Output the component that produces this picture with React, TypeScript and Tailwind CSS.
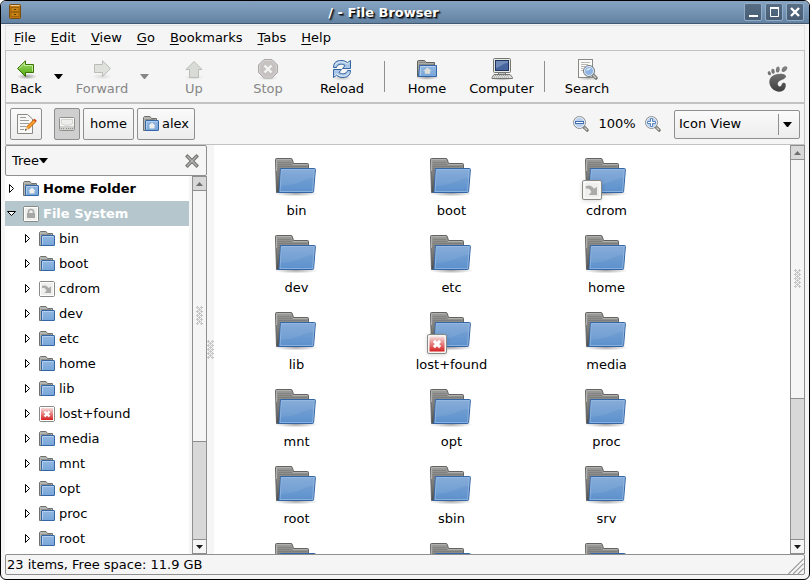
import React from "react";

const folders = [
  "bin",
  "boot",
  "cdrom",
  "dev",
  "etc",
  "home",
  "lib",
  "lost+found",
  "media",
  "mnt",
  "opt",
  "proc",
  "root",
  "sbin",
  "srv",
  "sys",
  "tmp",
  "usr",
];

// rows that fit in the side pane
const treeFolders = folders.slice(0, 13);

const menus = ["File", "Edit", "View", "Go", "Bookmarks", "Tabs", "Help"];

/* ---------- icons ---------- */

const Gradients = () => (
  <svg width="0" height="0" className="absolute" aria-hidden="true">
    <defs>
      <linearGradient id="blue" x1="0" y1="0" x2="0" y2="1">
        <stop offset="0" stopColor="#7ea7d6" />
        <stop offset="1" stopColor="#5c90cc" />
      </linearGradient>
      <linearGradient id="lightBlue" x1="0" y1="0" x2="0" y2="1">
        <stop offset="0" stopColor="#93b7e0" />
        <stop offset="1" stopColor="#77a6d9" />
      </linearGradient>
      <linearGradient id="gray" x1="0" y1="0" x2="0" y2="1">
        <stop offset="0" stopColor="#9c9c9a" />
        <stop offset="0.5" stopColor="#7d7d7b" />
        <stop offset="1" stopColor="#4c4c4a" />
      </linearGradient>
      <linearGradient id="green" x1="0" y1="0" x2="0" y2="1">
        <stop offset="0" stopColor="#a5dc72" />
        <stop offset="1" stopColor="#4da80c" />
      </linearGradient>
      <linearGradient id="red" x1="0" y1="0" x2="0" y2="1">
        <stop offset="0" stopColor="#f6dcdc" />
        <stop offset="1" stopColor="#d41f1f" />
      </linearGradient>
      <linearGradient id="foot" gradientUnits="userSpaceOnUse" x1="0" y1="0" x2="0" y2="28">
        <stop offset="0" stopColor="#8a8a8a" />
        <stop offset="1" stopColor="#3a3a3a" />
      </linearGradient>
      <radialGradient id="shade">
        <stop offset="0" stopColor="#000" stopOpacity="0.35" />
        <stop offset="1" stopColor="#000" stopOpacity="0" />
      </radialGradient>
    </defs>
  </svg>
);

const BigFolder = () => (
  <svg width="45" height="40" viewBox="0 0 45 40" aria-hidden="true">
    <ellipse cx="22" cy="36.5" rx="22" ry="3" fill="url(#shade)" />
    <path
      d="M1.5 2.5 Q1.5 1.5 2.5 1.5 H17 Q18 1.5 18.3 2.5 L19.5 6.5 H33.5 Q34.5 6.5 34.5 7.5 V30 L6 35.5 H2.5 Z"
      fill="url(#gray)"
      stroke="#636361"
    />
    <path d="M2.5 3 V14 M2.5 2.5 H17 M19 7.5 H33.5" stroke="#b0b0ae" fill="none" />
    <path
      d="M4 5.5 H17 M4 7.5 H18 M4 9.5 H33 M4 11.5 H6 M4 13.5 H6 M4 15.5 H6 M4 17.5 H6 M4 19.5 H6 M4 21.5 H6 M4 23.5 H5"
      stroke="#5b5b59"
      strokeOpacity="0.3"
    />
    <path
      d="M6.5 11.5 H40.5 Q41.5 11.5 41.4 12.5 L39.6 34.5 Q39.5 35.5 38.5 35.5 H4 Q5 35 5.2 33 Z"
      fill="url(#blue)"
      stroke="#3465a4"
    />
    <path d="M7.3 12.5 H40.3 L38.6 34.5 H6 Z" fill="none" stroke="#a5c4e8" strokeOpacity="0.6" />
    <path d="M8 13 H40 L39.3 21 C29 21 27 28 6.4 29 Z" fill="#fff" fillOpacity="0.07" />
  </svg>
);

const SmallFolder = ({ home = false }: { home?: boolean }) => (
  <svg width="16" height="16" viewBox="0 0 16 16" aria-hidden="true">
    <path d="M.5 14.5 V1.5 L1.5 .5 H7 L8.5 2.5 H13.5 V14.5 Z" fill="#b5b5b2" stroke="#6f716c" />
    <path d="M2 3.5 H12" stroke="#8e8f8b" />
    <rect x="2.5" y="4.5" width="13" height="10" rx="0.5" fill="url(#lightBlue)" stroke="#3465a4" />
    <path d="M3.5 13.5 V5.5 H14.5" fill="none" stroke="#b4cfee" />
    {home && <path d="M9 6.5 L12.5 10 H11.5 V12.5 H6.5 V10 H5.5 Z" fill="#eeeeec" />}
  </svg>
);

const HomeIcon = () => (
  <svg width="24" height="24" viewBox="0 0 24 24" aria-hidden="true">
    <ellipse cx="12" cy="20.5" rx="12" ry="2.5" fill="url(#shade)" />
    <path d="M2.5 19.5 V4 L3.5 3.5 H9.5 L11 5.5 H19.5 V19.5 Z" fill="#aaaaa7" stroke="#5f615c" />
    <path d="M4 5.5 H10 M4 7.5 H19" stroke="#8a8b87" />
    <path d="M4.5 8.5 H21.5 V19.5 H3.5 Z" fill="url(#lightBlue)" stroke="#3465a4" />
    <path d="M5.5 18.5 V9.5 H20.5" fill="none" stroke="#b4cfee" />
    <path d="M12.5 10.5 L16.5 14 H15.2 V16.8 H9.8 V14 H8.5 Z" fill="#deded9" />
  </svg>
);

type EmblemKind = "link" | "denied" | "lock";

const Emblem = ({ kind, size = 16 }: { kind: EmblemKind; size?: number }) => (
  <svg width={size} height={size} viewBox="0 0 16 16" aria-hidden="true">
    <rect x="0.5" y="0.5" width="15" height="15" rx="1.5" fill="#efefee" stroke="#888a85" />
    <rect x="1.5" y="1.5" width="13" height="13" fill="none" stroke="#fff" />
    {kind === "link" && (
      <path d="M3 5 C6 3.5 8.5 5 9.5 7 L12 5.5 V12 H5.5 L7.5 9.5 C6.5 7.5 5 6.5 3 7 Z" fill="#aaaaa8" />
    )}
    {kind === "denied" && (
      <>
        <rect x="2" y="2" width="12" height="12" fill="url(#red)" />
        <path d="M5.5 5.5 L10.5 10.5 M10.5 5.5 L5.5 10.5" stroke="#fff" strokeWidth="2.4" />
      </>
    )}
    {kind === "lock" && (
      <>
        <path d="M5.5 8 V5.5 Q5.5 3.5 8 3.5 Q10.5 3.5 10.5 5.5 V8" fill="none" stroke="#aaa" strokeWidth="1.6" />
        <rect x="4" y="7" width="8" height="5" fill="#a6a6a6" />
      </>
    )}
  </svg>
);

const BackIcon = () => (
  <svg width="24" height="24" viewBox="0 0 24 24" aria-hidden="true">
    <ellipse cx="13" cy="19.5" rx="10" ry="3" fill="url(#shade)" />
    <path d="M3.5 11.5 L11.5 3.8 V7.5 H19.5 V15.5 H11.5 V19.5 Z" fill="url(#green)" stroke="#3a7304" strokeLinejoin="round" />
    <path d="M5 11.5 L10.5 6.2 V8.5 H18.5 V14.5" fill="none" stroke="#c4ec9f" />
  </svg>
);

const ForwardIcon = () => (
  <svg width="24" height="24" viewBox="0 0 24 24" aria-hidden="true">
    <ellipse cx="12" cy="19.5" rx="10" ry="3" fill="url(#shade)" opacity="0.3" />
    <path d="M20.5 11.5 L12.5 3.8 V7.5 H4.5 V15.5 H12.5 V19.5 Z" fill="#dfe1dd" stroke="#b9bdb5" strokeLinejoin="round" />
  </svg>
);

const UpIcon = () => (
  <svg width="24" height="24" viewBox="0 0 24 24" aria-hidden="true">
    <ellipse cx="12" cy="20.5" rx="10" ry="2.5" fill="url(#shade)" opacity="0.3" />
    <path d="M12 4.5 L20 12.5 H16.5 V20.5 H7.5 V12.5 H4 Z" fill="#d9dcd6" stroke="#b9bdb5" strokeLinejoin="round" />
  </svg>
);

const StopIcon = () => (
  <svg width="24" height="24" viewBox="0 0 24 24" aria-hidden="true">
    <ellipse cx="12" cy="21" rx="10" ry="2.5" fill="url(#shade)" opacity="0.4" />
    <path d="M8 2.5 H16 L21.5 8 V15.5 L16 21 H8 L2.5 15.5 V8 Z" fill="#c6c2c2" stroke="#aaa6a6" />
    <path d="M8.5 3.5 H15.5 L20.5 8.4 V15 L15.5 20 H8.5 L3.5 15 V8.4 Z" fill="none" stroke="#d6d3d3" />
    <path d="M8.5 8.5 L15.5 15.5 M15.5 8.5 L8.5 15.5" stroke="#f4f4f4" strokeWidth="2.4" />
  </svg>
);

const ReloadIcon = () => (
  <svg width="24" height="24" viewBox="0 0 24 24" aria-hidden="true">
    <ellipse cx="12" cy="21" rx="10" ry="2.5" fill="url(#shade)" opacity="0.6" />
    <path
      d="M3.5 10.5 C3.5 5 7 3.5 11 3.5 C14 3.5 16 4.3 17.3 5.8 L20.5 3.5 V11.5 H12.5 L15 8.6 C12.5 6.5 7.5 6.5 6.5 10.5 Z"
      fill="#a9c6e6"
      stroke="#3465a4"
      strokeLinejoin="round"
    />
    <path
      d="M20.5 13.5 C20.5 18.5 17 20.5 13 20.5 C10 20.5 8 19.7 6.7 18.2 L3.5 20.5 V12.5 H11.5 L9 15.4 C11.5 17.5 16.5 17.5 17.5 13.5 Z"
      fill="#a9c6e6"
      stroke="#3465a4"
      strokeLinejoin="round"
    />
    <path d="M5 8.5 C6.5 4.5 13 3.5 17.3 7 L19.5 5.5 M19 15.5 C17.5 19.5 11 20.5 6.7 17 L4.5 18.5" fill="none" stroke="#e1edf9" />
  </svg>
);

const ComputerIcon = () => (
  <svg width="24" height="24" viewBox="0 0 24 24" aria-hidden="true">
    <ellipse cx="12" cy="21.5" rx="11" ry="2.2" fill="url(#shade)" />
    <rect x="3.5" y="1.5" width="17" height="14" rx="1" fill="#e8e8e5" stroke="#747671" />
    <rect x="5.5" y="3.5" width="13" height="10" fill="#46659f" stroke="#1f3560" />
    <path d="M6 4 H18 V6 C12 6.5 11 10 6 11 Z" fill="#8ea5cc" fillOpacity="0.6" />
    <path d="M9 15.5 H15 L16 17.5 H8 Z" fill="#c3c3bf" stroke="#747671" />
    <path d="M4 17.5 H20 L22.5 20.5 V21.5 H2 V20.5 Z" fill="#dededb" stroke="#747671" />
    <path d="M5 18.5 H19 M4 20 H20" stroke="#a2a39f" strokeDasharray="1 1" />
  </svg>
);

const SearchIcon = () => (
  <svg width="24" height="24" viewBox="0 0 24 24" aria-hidden="true">
    <ellipse cx="13" cy="21.5" rx="10" ry="2" fill="url(#shade)" opacity="0.6" />
    <rect x="3.5" y="2.5" width="14" height="18" fill="#fbfbfa" stroke="#888a85" />
    <path d="M6 5.5 H15 M6 7.5 H13 M6 9.5 H10 M6 11.5 H8 M6 13.5 H8" stroke="#b8b9b5" />
    <path d="M17.5 17.5 L21 21" stroke="#777974" strokeWidth="3.6" strokeLinecap="round" />
    <path d="M18 18 L21 21" stroke="#d0d0cd" strokeWidth="1.2" />
    <circle cx="14" cy="14" r="5.5" fill="#8db4e2" stroke="#777974" />
    <circle cx="14" cy="14" r="4.5" fill="none" stroke="#e2ebf5" />
    <path d="M11 14 C11.5 11.5 14 10.5 16 11.5 C14.5 13 13 13 11 14 Z" fill="#dbe8f7" />
  </svg>
);

const Magnifier = ({ plus = false }: { plus?: boolean }) => (
  <svg width="18" height="18" viewBox="0 0 18 18" aria-hidden="true">
    <path d="M12 12 L15.2 15.2" stroke="#777974" strokeWidth="3.2" strokeLinecap="round" />
    <path d="M12.5 12.5 L15 15" stroke="#d0d0cd" strokeWidth="1.2" />
    <circle cx="7.5" cy="7.5" r="6" fill="#b9d0ec" stroke="#8f918d" />
    <circle cx="7.5" cy="7.5" r="5" fill="none" stroke="#e6edf6" />
    {plus ? (
      <path d="M6.5 3.5 H8.5 V6.5 H11.5 V8.5 H8.5 V11.5 H6.5 V8.5 H3.5 V6.5 H6.5 Z" fill="#fff" stroke="#5b86c0" />
    ) : (
      <rect x="3.5" y="6.5" width="8" height="2" fill="#fff" stroke="#3f6fb0" />
    )}
  </svg>
);

const FootIcon = () => (
  <svg width="22" height="28" viewBox="0 0 22 28" aria-hidden="true">
    <g fill="url(#foot)">
      <path d="M17.2 1.6 C19.6 .6 21 2 20.2 3.8 C19.3 5.8 17 7.4 15.4 6.8 C13.7 6.1 15 2.5 17.2 1.6 Z" />
      <ellipse cx="10.8" cy="4.5" rx="1.9" ry="3" transform="rotate(6 10.8 4.5)" />
      <ellipse cx="6" cy="6.2" rx="1.7" ry="2.5" transform="rotate(-10 6 6.2)" />
      <ellipse cx="2.3" cy="8.2" rx="1.5" ry="2.2" transform="rotate(-20 2.3 8.2)" />
      <path d="M17.9 9.8 C15 7.8 7.4 8.8 4.4 11.8 C.9 15.3 2.2 20.6 5.4 23.8 C8.6 27.2 14.4 27.6 17.2 24.7 C18.9 23 19.2 19.8 18.4 18.6 C17.4 17.3 15.1 17.8 14.7 19.4 C14.3 20.8 13.2 21.8 11.9 21.2 C10.1 20.2 10.3 17.4 12.5 16.1 C15.1 14.7 18.6 13.8 18.9 11.8 C19 11 18.5 10.2 17.9 9.8 Z" />
    </g>
  </svg>
);

const EditIcon = () => (
  <svg width="22" height="22" viewBox="0 0 22 22" aria-hidden="true">
    <path d="M2.5 1.5 H12.5 L17.5 6 V20.5 H2.5 Z" fill="#f8f8f7" stroke="#888a85" />
    <path d="M5 4.5 H11 M5 7.5 H14 M5 10.5 H14 M5 13.5 H11 M5 16.5 H9" stroke="#9c9e99" />
    <path d="M20 7.5 L12.5 15" stroke="#c4600a" strokeWidth="3.6" />
    <path d="M20 7.5 L12.5 15" stroke="#fca32d" strokeWidth="2" />
    <path d="M19.6 7.9 L20.7 6.8" stroke="#c8401c" strokeWidth="3" />
    <path d="M11.2 13.8 L13.8 16.3 L10.2 17.4 Z" fill="#e9c48d" />
    <path d="M9.8 17.8 L10.6 15.8 L11.8 17 Z" fill="#222" />
  </svg>
);

const DriveIcon = () => (
  <svg width="16" height="16" viewBox="0 0 16 16" aria-hidden="true">
    <rect x="0.5" y="1.5" width="15" height="13" rx="1" fill="#f6f6f5" stroke="#8e908c" />
    <path d="M2.5 3.5 H13.5 V8 Q8 11 2.5 8 Z" fill="#ededeb" stroke="#d3d4d1" />
    <rect x="1" y="10" width="14" height="4" fill="#cfd0cd" />
    <path d="M2 12.5 H5 M7 12.5 H14" stroke="#8e908c" strokeDasharray="1 1" />
  </svg>
);

const CabinetIcon = () => (
  <svg width="16" height="16" viewBox="0 0 16 16" aria-hidden="true">
    <rect x="2.5" y="0.5" width="11" height="14" rx="1" fill="#c07a13" stroke="#7a4c0c" />
    <path d="M3.5 1.5 H12.5" stroke="#ecd09c" />
    <rect x="4" y="3.5" width="8" height="4" fill="#c98418" stroke="#a0640c" />
    <rect x="4" y="8.5" width="8" height="4" fill="#c98418" stroke="#a0640c" />
    <path d="M7 5.5 H9 M7 10.5 H9" stroke="#5e3b0a" />
  </svg>
);

const CloseIcon = () => (
  <svg width="14" height="14" viewBox="0 0 14 14" aria-hidden="true">
    <path d="M2.5 2.5 L11.5 11.5 M11.5 2.5 L2.5 11.5" stroke="#6f716c" strokeWidth="3.4" strokeLinecap="square" />
    <path d="M2.5 2.5 L11.5 11.5 M11.5 2.5 L2.5 11.5" stroke="#b4b5b2" strokeWidth="1.4" strokeLinecap="square" />
  </svg>
);

const Caret = ({ className = "text-black" }: { className?: string }) => (
  <svg width="9" height="5" viewBox="0 0 9 5" className={className} aria-hidden="true">
    <path d="M0 0 H9 L5 5 H4 Z" fill="currentColor" />
  </svg>
);

const Expander = ({ open = false }: { open?: boolean }) => (
  <svg width="12" height="12" viewBox="0 0 12 12" aria-hidden="true">
    {open ? (
      <path d="M2.5 3.5 H10.5 L6.5 7.5 Z" fill="#fff" stroke="#000" />
    ) : (
      <path d="M4.5 1.5 V9.5 L8.5 5.5 Z" fill="#fff" stroke="#000" />
    )}
  </svg>
);

const Grip = () => (
  <svg width="7" height="19" viewBox="0 0 7 19" aria-hidden="true" shapeRendering="crispEdges">
    <path
      d="M0 1.5H7M0 5.5H7M0 9.5H7M0 13.5H7M0 17.5H7M1.5 0V19M5.5 0V19"
      stroke="#c6c6c6"
      strokeDasharray="3 1"
    />
    <path
      d="M2 3.5H5M2 7.5H5M2 11.5H5M2 15.5H5M3.5 2V5M3.5 6V9M3.5 10V13M3.5 14V17"
      stroke="#c6c6c6"
    />
  </svg>
);

/* ---------- pieces ---------- */

interface ToolButtonProps {
  label: string;
  icon: React.ReactNode;
  width?: string;
  disabled?: boolean;
}

const ToolButton: React.FC<ToolButtonProps> = ({ label, icon, width = "w-[74px]", disabled }) => (
  <button
    disabled={disabled}
    className={`${width} flex shrink-0 flex-col items-center ${disabled ? "text-[#868686]" : "text-black"}`}
  >
    {icon}
    <span>{label}</span>
  </button>
);

const Separator = () => <div className="mx-[5px] h-[31px] w-px shrink-0 bg-[#8f8f8f]" />;

const ScrollBar = ({ thumb }: { thumb: string }) => (
  <div className="flex w-[15px] shrink-0 flex-col border-x border-[#8f8f8f] bg-[#d8d8d8]">
    <button
      aria-label="Scroll up"
      className="flex h-[15px] shrink-0 items-center justify-center border-y border-[#8f8f8f] bg-[#d8d8d8]"
    >
      <svg width="7" height="4" viewBox="0 0 7 4">
        <path d="M3.5 0 L7 4 H0 Z" fill="#6e6e6e" />
      </svg>
    </button>
    <div className="min-h-0 flex-1">
      <div className={`${thumb} flex items-center justify-center border-b border-[#8f8f8f] bg-[#f5f5f5]`}>
        <Grip />
      </div>
    </div>
    <button
      aria-label="Scroll down"
      className="flex h-[15px] shrink-0 items-center justify-center border-y border-[#8f8f8f] bg-[#f5f5f5]"
    >
      <svg width="7" height="4" viewBox="0 0 7 4">
        <path d="M3.5 4 L7 0 H0 Z" fill="#1a1a1a" />
      </svg>
    </button>
  </div>
);

const TitleBar = () => {
  const windowButton =
    "size-[18px] rounded-xs border border-[#91adc9] bg-linear-to-b from-[#566d84] to-[#485d73]";
  return (
    <header className="flex h-[23px] shrink-0 items-center border-b border-[#41586f] bg-linear-to-b from-[#86a4c2] to-[#6483a3] pr-[5px] pl-1.5">
      <CabinetIcon />
      <h1 className="flex-1 pt-0.5 text-center font-bold text-white [text-shadow:1px_1px_1px_#000,2px_2px_1px_#33475c]">
        / - File Browser
      </h1>
      <div className="flex gap-[3px]">
        <button aria-label="Minimize" className={windowButton}>
          <svg width="16" height="16" viewBox="0 0 16 16">
            <path d="M4 12 H13" stroke="#fff" strokeWidth="2" />
          </svg>
        </button>
        <button aria-label="Maximize" className={windowButton}>
          <svg width="16" height="16" viewBox="0 0 16 16">
            <path d="M4.5 4 V12.5 H12.5 V4" fill="none" stroke="#fff" />
            <path d="M4 4 H13" stroke="#fff" strokeWidth="2" />
          </svg>
        </button>
        <button aria-label="Close" className={windowButton}>
          <svg width="16" height="16" viewBox="0 0 16 16">
            <path d="M4 4 L12 12 M12 4 L4 12" stroke="#fff" strokeWidth="2.4" />
          </svg>
        </button>
      </div>
    </header>
  );
};

const LocationBar = () => {
  const pathButton =
    "flex h-8 items-center justify-center rounded-xs border border-[#8f8f8f] bg-linear-to-b from-[#fafafa] to-[#ededed]";
  return (
    <div className="flex h-[42px] shrink-0 items-center border border-[#c2c2c2] px-1">
      <button aria-label="Edit location" className={`${pathButton} w-8`}>
        <EditIcon />
      </button>
      <nav aria-label="Path" className="ml-3 flex gap-[3px]">
        <button
          aria-label="File System"
          className="flex h-8 w-[26px] items-center justify-center rounded-xs border border-[#8f8f8f] bg-[#cfcfcf]"
        >
          <DriveIcon />
        </button>
        <button className={`${pathButton} w-[51px]`}>home</button>
        <button className={`${pathButton} w-[58px] gap-[3px]`}>
          <SmallFolder home />
          alex
        </button>
      </nav>
      <div className="ml-auto flex items-center">
        <button aria-label="Zoom out">
          <Magnifier />
        </button>
        <span className="w-[54px] text-center">100%</span>
        <button aria-label="Zoom in">
          <Magnifier plus />
        </button>
        <div className="relative ml-3">
          <select
            aria-label="View as"
            className="block h-[29px] w-[126px] appearance-none rounded-xs border border-[#8f8f8f] bg-linear-to-b from-[#fafafa] to-[#ededed] pl-1"
          >
            <option>Icon View</option>
            <option>List View</option>
          </select>
          <div className="pointer-events-none absolute inset-y-1 right-0 flex w-[22px] items-center border-l border-[#8f8f8f] pl-1">
            <Caret />
          </div>
        </div>
      </div>
    </div>
  );
};

const TreeIcon = ({ name }: { name: string }) => {
  if (name === "cdrom") return <Emblem kind="link" />;
  if (name === "lost+found") return <Emblem kind="denied" />;
  return <SmallFolder />;
};

const SideBar = () => (
  <aside className="flex w-[202px] shrink-0 flex-col">
    <div className="flex h-[31px] shrink-0 items-center justify-between rounded-xs border border-[#8f8f8f] pr-[7px] pl-1.5">
      <button className="flex items-center">
        Tree <Caret />
      </button>
      <button aria-label="Close side pane">
        <CloseIcon />
      </button>
    </div>
    <div className="flex min-h-0 flex-1 gap-[3px]">
      <ul className="flex-1 overflow-hidden bg-white">
        <li className="flex h-[25px] items-center font-bold">
          <Expander />
          <span className="mr-1 ml-1.5">
            <SmallFolder home />
          </span>
          Home Folder
        </li>
        <li>
          <div className="flex h-[25px] items-center bg-[#b5c7cd] font-bold text-white">
            <Expander open />
            <span className="mr-1 ml-1.5">
              <Emblem kind="lock" />
            </span>
            File System
          </div>
          <ul>
            {treeFolders.map((name) => (
              <li key={name} className="flex h-[25px] items-center pl-4">
                <Expander />
                <span className="mr-1 ml-1.5">
                  <TreeIcon name={name} />
                </span>
                {name}
              </li>
            ))}
          </ul>
        </li>
      </ul>
      <ScrollBar thumb="h-[72%]" />
    </div>
  </aside>
);

const IconView = () => (
  <main className="min-w-0 flex-1 overflow-hidden bg-white pl-[5px]">
    <ul className="grid grid-cols-[repeat(auto-fill,155px)] pt-3">
      {folders.map((name) => (
        <li key={name} className="flex h-[77px] flex-col items-center">
          <div className="relative">
            <BigFolder />
            {name === "cdrom" && (
              <span className="absolute top-[23px] -left-[2px] drop-shadow-sm">
                <Emblem kind="link" size={20} />
              </span>
            )}
            {name === "lost+found" && (
              <span className="absolute top-[23px] -left-[2px] drop-shadow-sm">
                <Emblem kind="denied" size={20} />
              </span>
            )}
          </div>
          <span className="mt-1.5">{name}</span>
        </li>
      ))}
    </ul>
  </main>
);

export default function App() {
  return (
    <div className="flex h-screen w-full flex-col overflow-hidden rounded-md border border-black bg-[#f5f5f5] font-['DejaVu_Sans','Liberation_Sans',sans-serif] text-[13px] leading-4 text-black">
      <Gradients />
      <TitleBar />
      <div className="flex min-h-0 flex-1 flex-col px-1 pt-px pb-1">
        <nav
          aria-label="Menu"
          className="flex h-[25px] shrink-0 items-center gap-px border border-b-0 border-[#e2e2e2] pl-px"
        >
          {menus.map((menu) => (
            <button key={menu} className="px-[7px]">
              <span className="underline underline-offset-2">{menu[0]}</span>
              {menu.slice(1)}
            </button>
          ))}
        </nav>
        <div className="flex h-[53px] shrink-0 items-center border border-[#c2c2c2]">
          <ToolButton label="Back" icon={<BackIcon />} width="w-10" />
          <button aria-label="Back history" className="flex w-6 justify-center">
            <Caret />
          </button>
          <ToolButton label="Forward" icon={<ForwardIcon />} width="w-16" disabled />
          <button aria-label="Forward history" disabled className="flex w-5 justify-center">
            <Caret className="text-[#868686]" />
          </button>
          <div className="ml-[3px] flex items-center">
            <ToolButton label="Up" icon={<UpIcon />} disabled />
            <ToolButton label="Stop" icon={<StopIcon />} disabled />
            <ToolButton label="Reload" icon={<ReloadIcon />} />
            <Separator />
            <ToolButton label="Home" icon={<HomeIcon />} />
            <ToolButton label="Computer" icon={<ComputerIcon />} width="w-[75px]" />
            <Separator />
            <ToolButton label="Search" icon={<SearchIcon />} />
          </div>
          <div className="mt-1 mr-[15px] ml-auto">
            <FootIcon />
          </div>
        </div>
        <LocationBar />
        <div className="flex min-h-0 flex-1">
          <SideBar />
          <div className="flex w-[7px] shrink-0 items-center justify-center">
            <Grip />
          </div>
          <IconView />
          <ScrollBar thumb="h-[63%]" />
        </div>
        <footer className="flex h-[21px] shrink-0 items-center justify-between rounded-xs border border-[#8f8f8f] pl-px">
          <span>23 items, Free space: 11.9 GB</span>
          <svg width="17" height="19" viewBox="0 0 17 20" className="self-end" aria-hidden="true">
            <path d="M1 20 L17 4 M6 20 L17 9 M11 20 L17 14" stroke="#9a9a9a" strokeWidth="1.2" />
          </svg>
        </footer>
      </div>
    </div>
  );
}
